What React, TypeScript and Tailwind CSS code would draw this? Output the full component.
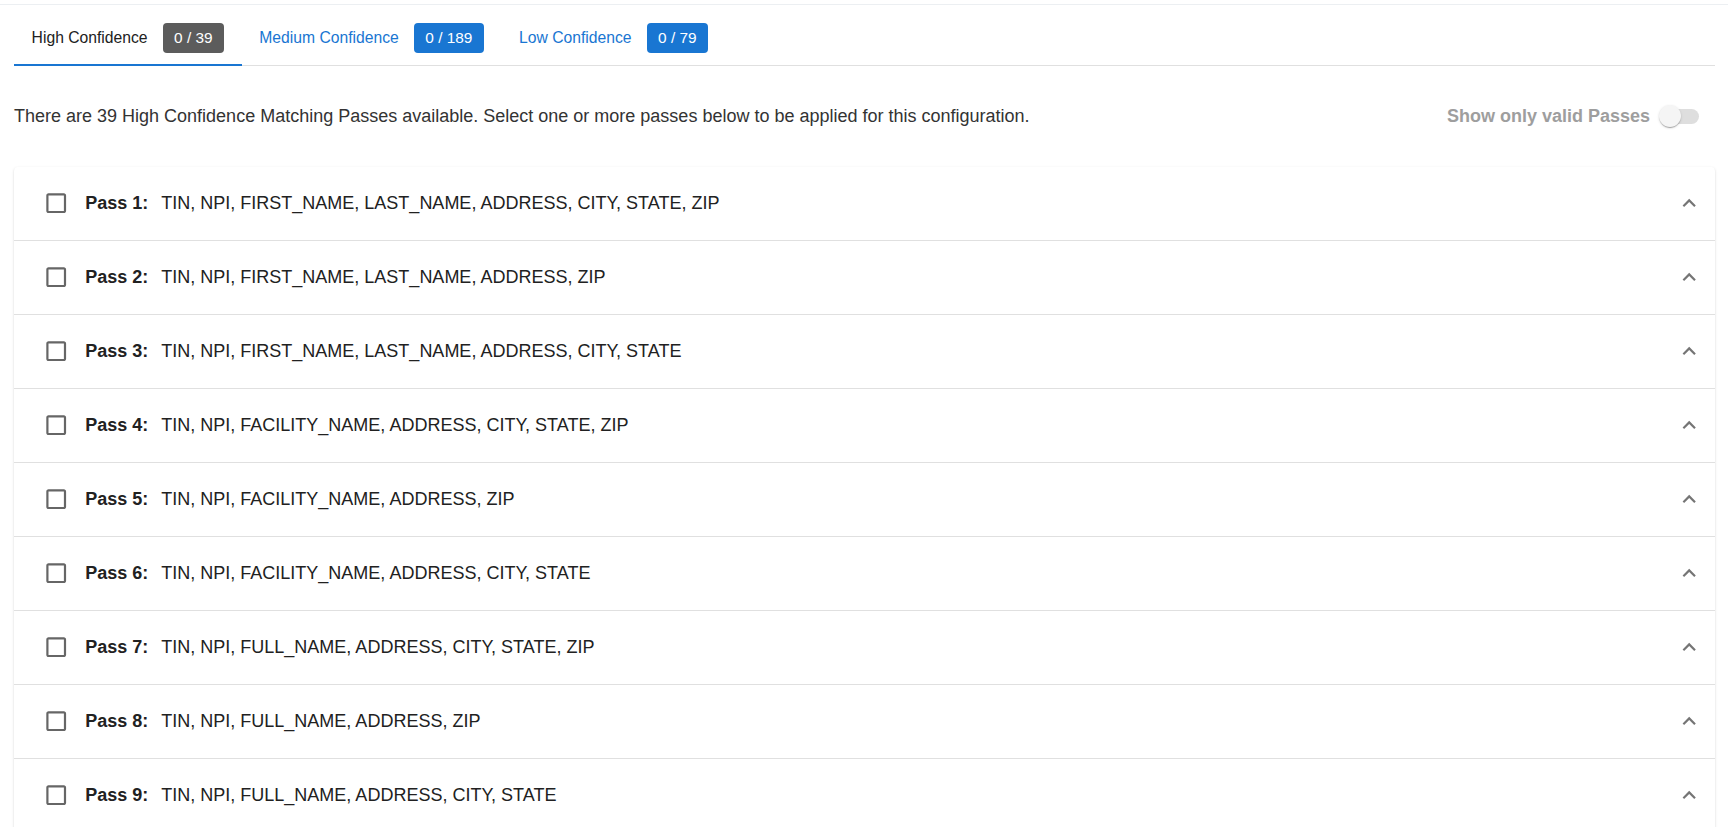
import React from "react";

const passes: string[] = [
  "TIN, NPI, FIRST_NAME, LAST_NAME, ADDRESS, CITY, STATE, ZIP",
  "TIN, NPI, FIRST_NAME, LAST_NAME, ADDRESS, ZIP",
  "TIN, NPI, FIRST_NAME, LAST_NAME, ADDRESS, CITY, STATE",
  "TIN, NPI, FACILITY_NAME, ADDRESS, CITY, STATE, ZIP",
  "TIN, NPI, FACILITY_NAME, ADDRESS, ZIP",
  "TIN, NPI, FACILITY_NAME, ADDRESS, CITY, STATE",
  "TIN, NPI, FULL_NAME, ADDRESS, CITY, STATE, ZIP",
  "TIN, NPI, FULL_NAME, ADDRESS, ZIP",
  "TIN, NPI, FULL_NAME, ADDRESS, CITY, STATE",
];

const tabs = [
  { label: "High Confidence", count: "0 / 39", active: true },
  { label: "Medium Confidence", count: "0 / 189", active: false },
  { label: "Low Confidence", count: "0 / 79", active: false },
];

function CheckboxIcon() {
  return (
    <svg viewBox="0 0 24 24" className="w-[26.4px] h-[26.4px] shrink-0 fill-[#666666]">
      <path d="M19 5v14H5V5h14m0-2H5c-1.11 0-2 .9-2 2v14c0 1.1.89 2 2 2h14c1.1 0 2-.9 2-2V5c0-1.1-.9-2-2-2z" />
    </svg>
  );
}

function ExpandLessIcon() {
  return (
    <svg viewBox="0 0 24 24" className="w-[26.4px] h-[26.4px] shrink-0 fill-[#757575]">
      <path d="M12 8l-6 6 1.41 1.41L12 10.83l4.59 4.58L18 14z" />
    </svg>
  );
}

export default function App() {
  return (
    <div className="min-h-screen bg-white text-[#212121] font-['Liberation_Sans',Arial,sans-serif]">
      {/* top divider */}
      <div className="h-[4px]" />
      <div className="border-t border-[#eceff2]" />

      <div className="pl-[14px] pr-[13px]">
        {/* Tabs */}
        <div className="mt-[6px] flex border-b border-[#e0e0e0]">
          {tabs.map((t) => (
            <div
              key={t.label}
              className="relative h-[54px] px-[17.6px] flex items-center gap-[15px]"
            >
              <span
                className={
                  "text-[15.7px] leading-none " +
                  (t.active ? "text-[#212121]" : "text-[#1976d2]")
                }
              >
                {t.label}
              </span>
              <span
                className={
                  "h-[30px] px-[11.5px] rounded-[4px] flex items-center text-[15.4px] text-white " +
                  (t.active ? "bg-[#5c5c5c]" : "bg-[#1976d2]")
                }
              >
                {t.count}
              </span>
              {t.active && (
                <span className="absolute left-0 right-0 -bottom-px h-[2px] bg-[#1976d2]" />
              )}
            </div>
          ))}
        </div>

        {/* Description + toggle */}
        <div className="mt-[37px] flex items-center justify-between">
          <p className="text-[18px] leading-[26.4px] text-[#333333]">
            There are 39 High Confidence Matching Passes available. Select one or more passes below to be applied for this configuration.
          </p>
          <label className="flex items-center gap-[9px] pr-[16px]">
            <span className="text-[18px] font-bold text-[#9e9e9e] leading-[26px]">
              Show only valid Passes
            </span>
            <span className="relative w-[40px] h-[22px] flex items-center">
              <span className="absolute left-[3px] w-[37px] h-[15.4px] rounded-full bg-[#dedede]" />
              <span className="absolute left-0 w-[22px] h-[22px] rounded-full bg-[#f5f5f5] shadow-[0_2px_1px_-1px_rgba(0,0,0,0.2),0_1px_1px_0_rgba(0,0,0,0.14),0_1px_3px_0_rgba(0,0,0,0.12)]" />
            </span>
          </label>
        </div>

        {/* Pass list */}
        <div className="mt-[37.5px] rounded-t-[4px] bg-white shadow-[0_2px_1px_-1px_rgba(0,0,0,0.2),0_1px_1px_0_rgba(0,0,0,0.14),0_1px_3px_0_rgba(0,0,0,0.12)]">
          {passes.map((p, i) => (
            <div
              key={i}
              className="h-[74px] flex items-center border-b border-[#e0e0e0] pl-[28.7px] pr-[13px]"
            >
              <CheckboxIcon />
              <span className="ml-[16.2px] text-[18px] font-bold">Pass {i + 1}:</span>
              <span className="ml-[13px] text-[18px]">{p}</span>
              <span className="ml-auto">
                <ExpandLessIcon />
              </span>
            </div>
          ))}
        </div>
      </div>
    </div>
  );
}
